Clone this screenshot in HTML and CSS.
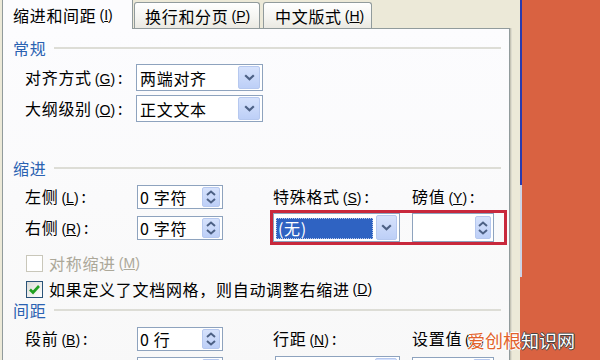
FILE: index.html
```html
<!DOCTYPE html>
<html lang="zh-CN">
<head>
<meta charset="utf-8">
<title>段落</title>
<link rel="stylesheet" href="styles.css">
</head>
<body>
<div class="screen">
  <div class="dialog">
    <div class="tabs">
      <div class="tab active">缩进和间距<span class="k">(<u>I</u>)</span></div>
      <div class="tab t2">换行和分页<span class="k">(<u>P</u>)</span></div>
      <div class="tab t3">中文版式<span class="k">(<u>H</u>)</span></div>
    </div>
    <div class="panel">
      <div class="group g1"><span class="gt">常规</span><span class="gl"></span></div>
      <div class="row r1">
        <div class="lbl">对齐方式<span class="k">(<u>G</u>)</span><span class="c">:</span></div>
        <div class="combo"><span class="val">两端对齐</span><span class="dd"><svg width="11" height="7" viewBox="0 0 11 7"><polyline points="1.2,1.2 5.5,5.3 9.8,1.2" fill="none" stroke="#4D6185" stroke-width="2.2"/></svg></span></div>
      </div>
      <div class="row r2">
        <div class="lbl">大纲级别<span class="k">(<u>O</u>)</span><span class="c">:</span></div>
        <div class="combo"><span class="val">正文文本</span><span class="dd"><svg width="11" height="7" viewBox="0 0 11 7"><polyline points="1.2,1.2 5.5,5.3 9.8,1.2" fill="none" stroke="#4D6185" stroke-width="2.2"/></svg></span></div>
      </div>

      <div class="group g2"><span class="gt">缩进</span><span class="gl"></span></div>
      <div class="grid indent">
        <div class="lbl">左侧<span class="k">(<u>L</u>)</span><span class="c">:</span></div>
        <div class="spin"><span class="val">0 字符</span><span class="sb"><svg width="12" height="16" viewBox="0 0 12 16"><polyline points="2,6 6,2.5 10,6" fill="none" stroke="#4D6185" stroke-width="2"/><polyline points="2,10 6,13.5 10,10" fill="none" stroke="#4D6185" stroke-width="2"/></svg></span></div>
        <div class="lbl">特殊格式<span class="k">(<u>S</u>)</span><span class="c">:</span></div>
        <div class="lbl">磅值<span class="k">(<u>Y</u>)</span><span class="c">:</span></div>

        <div class="lbl">右侧<span class="k">(<u>R</u>)</span><span class="c">:</span></div>
        <div class="spin"><span class="val">0 字符</span><span class="sb"><svg width="12" height="16" viewBox="0 0 12 16"><polyline points="2,6 6,2.5 10,6" fill="none" stroke="#4D6185" stroke-width="2"/><polyline points="2,10 6,13.5 10,10" fill="none" stroke="#4D6185" stroke-width="2"/></svg></span></div>
        <div class="mark">
          <div class="combo sel"><span class="val"><span class="hl">(无)</span></span><span class="dd"><svg width="11" height="7" viewBox="0 0 11 7"><polyline points="1.2,1.2 5.5,5.3 9.8,1.2" fill="none" stroke="#4D6185" stroke-width="2.2"/></svg></span></div>
          <div class="spin pt"><span class="val"></span><span class="sb"><svg width="12" height="16" viewBox="0 0 12 16"><polyline points="2,6 6,2.5 10,6" fill="none" stroke="#4D6185" stroke-width="2"/><polyline points="2,10 6,13.5 10,10" fill="none" stroke="#4D6185" stroke-width="2"/></svg></span></div>
        </div>
      </div>

      <div class="check c1 dis"><span class="box"></span>对称缩进<span class="k">(<u>M</u>)</span></div>
      <div class="check c2"><span class="box on"><svg width="15" height="15" viewBox="0 0 15 15"><polyline points="3,7.5 6,10.5 12,4" fill="none" stroke="#21A121" stroke-width="2.6"/></svg></span>如果定义了文档网格，则自动调整右缩进<span class="k">(<u>D</u>)</span></div>

      <div class="group g3"><span class="gt">间距</span><span class="gl"></span></div>
      <div class="grid spacing">
        <div class="lbl">段前<span class="k">(<u>B</u>)</span><span class="c">:</span></div>
        <div class="spin"><span class="val">0 行</span><span class="sb"><svg width="12" height="16" viewBox="0 0 12 16"><polyline points="2,6 6,2.5 10,6" fill="none" stroke="#4D6185" stroke-width="2"/><polyline points="2,10 6,13.5 10,10" fill="none" stroke="#4D6185" stroke-width="2"/></svg></span></div>
        <div class="lbl">行距<span class="k">(<u>N</u>)</span><span class="c">:</span></div>
        <div class="lbl">设置值<span class="k">(<u>A</u>)</span><span class="c">:</span></div>

        <div class="lbl">段后<span class="k">(<u>F</u>)</span><span class="c">:</span></div>
        <div class="spin"><span class="val">0 行</span><span class="sb"></span></div>
        <div class="combo lw"><span class="val">单倍行距</span><span class="dd"></span></div>
        <div class="spin pt2"><span class="val"></span><span class="sb"></span></div>
      </div>
    </div>
  </div>
  <div class="side"><div class="edge"></div></div>
  <div class="wm"><span class="wa">爱创根</span><span class="wb">知识网</span></div>
</div>
</body>
</html>
```

FILE: styles.css
```css
* { box-sizing: border-box; }
html, body { margin: 0; padding: 0; }
body {
  width: 600px;
  height: 360px;
  overflow: hidden;
  font-family: "Noto Sans CJK SC", "Noto Sans", sans-serif;
  font-size: 16px;
  color: #000;
}
.screen {
  position: relative;
  display: flex;
  width: 600px;
  height: 360px;
  overflow: hidden;
  background: #ECE9D8;
}
.dialog {
  width: 520px;
  flex: none;
  padding-left: 2px;
  background: #ECE9D8;
}

/* tabs */
.tabs { display: flex; align-items: flex-end; height: 28px; }
.tab {
  display: flex;
  align-items: center;
  line-height: 20px;
  letter-spacing: 0.7px;
  white-space: nowrap;
}
.tab.active {
  position: relative;
  z-index: 1;
  width: 131px;
  height: 29px;
  margin-bottom: -1px;
  padding-left: 10px;
  background: #FCFCFE;
  border-left: 1px solid #919B9C;
  border-right: 1px solid #919B9C;
}
.t2, .t3 {
  height: 26px;
  border: 1px solid #919B9C;
  border-bottom: none;
  border-radius: 3px 3px 0 0;
  background: linear-gradient(#FFFFFF, #F4F4F0 60%, #EAE9E2);
}
.t2 { margin-left: 1px; width: 126px; padding-left: 10px; }
.t3 { margin-left: 3px; width: 109px; padding-left: 11px; }

.k {
  font-family: "Liberation Sans", Arial, sans-serif;
  font-size: 14px;
  letter-spacing: 0;
  margin-left: 3px;
}
.c { margin-left: 3px; }

/* panel */
.panel {
  width: 508px;
  height: 345px;
  border: 1px solid #919B9C;
  background: linear-gradient(#FCFCFE, #F8F8F8);
  padding: 0 8px 0 10px;
  box-shadow: 1px 0 0 #C5C3B5, 2px 0 0 #DDDBCE;
}
.group {
  display: flex;
  align-items: center;
  height: 20px;
  line-height: 20px;
  color: #2A62B2;
  letter-spacing: 0.7px;
}
.gl { flex: 1; height: 2px; background: #DDDDD6; margin-left: 8px; }
.g1 { margin-top: 9px; }
.g2 { margin-top: 36px; }
.g3 { margin-top: 2px; }

.row { display: flex; align-items: center; height: 27px; padding-left: 12px; }
.r1 { margin-top: 6px; }
.r2 { margin-top: 4px; }
.lbl {
  white-space: nowrap;
  letter-spacing: 0.7px;
  line-height: 20px;
}
.row .lbl { width: 111px; flex: none; }

/* controls */
.combo {
  display: flex;
  align-items: center;
  width: 127px;
  height: 27px;
  border: 1px solid #8EA3BE;
  background: #fff;
  padding: 1px 2px 1px 3px;
}
.val {
  flex: 1;
  min-width: 0;
  white-space: nowrap;
  line-height: 20px;
  letter-spacing: 0.7px;
}
.dd {
  flex: none;
  width: 22px;
  height: 23px;
  border: 1px solid #B6C8EF;
  border-radius: 2px;
  background: linear-gradient(#D6E2FC, #BDCFF7);
  display: flex;
  align-items: center;
  justify-content: center;
}
.spin {
  display: flex;
  align-items: center;
  width: 86px;
  height: 24px;
  margin-left: 1px;
  border: 1px solid #8EA3BE;
  background: #fff;
  padding: 1px 2px 1px 2px;
}
.sb {
  flex: none;
  width: 18px;
  height: 20px;
  border: 1px solid #B6C8EF;
  border-radius: 2px;
  background: linear-gradient(#D6E2FC, #BDCFF7);
  display: flex;
  align-items: center;
  justify-content: center;
}

/* grids */
.grid {
  display: grid;
  grid-template-columns: 111px 137px 139px 1fr;
  align-items: center;
  padding-left: 12px;
}
.indent { margin-top: 6px; grid-template-rows: 26px 35px; }
.spacing { margin-top: 7px; grid-template-rows: 24px 24px; row-gap: 6px; }

.mark {
  grid-column: 3 / 5;
  margin-left: -3px;
  width: 237px;
  height: 35px;
  border: 3px solid #C8283C;
  display: flex;
  align-items: center;
  gap: 12px;
}
.sel { height: 29px; padding-left: 2px; }
.sel .dd { height: 25px; width: 21px; }
.hl {
  display: inline-block;
  width: 97px;
  height: 21px;
  padding-left: 1px;
  line-height: 19px;
  background: #2F63C2;
  color: #fff;
  border: 1px dotted #B9C9EA;
  vertical-align: middle;
}
.pt { width: 82px; height: 29px; margin-left: 0; }
.pt .sb { width: 16px; height: 23px; }
.lw { margin-left: 2px; width: 125px; }
.pt2 { width: 82px; margin-left: 0; }

/* checkboxes */
.check {
  display: flex;
  align-items: center;
  height: 18px;
  padding-left: 13px;
  line-height: 18px;
  letter-spacing: 0.7px;
  white-space: nowrap;
}
.c1 { margin-top: 9px; }
.c2 { margin-top: 8px; }
.box {
  flex: none;
  width: 17px;
  height: 17px;
  margin-right: 6px;
  border: 1px solid #2A5378;
  background: linear-gradient(135deg, #DCDCD7, #FFFFFF);
  display: flex;
  align-items: center;
  justify-content: center;
}
.dis { color: #ACA899; }
.dis .box { border-color: #C9C7BA; background: #FFFFFF; }

/* right side */
.side { flex: 1; display: flex; background: #D96241; }
.edge {
  width: 2px;
  height: 100%;
  background: linear-gradient(#2A3AAE 0, #2A3AAE 185px, #CDD3E6 185px, #CDD3E6 277px, #D96241 277px);
}

/* watermark overlay */
.wm {
  position: absolute;
  left: 467px;
  top: 329px;
  font-size: 18px;
  line-height: 22px;
  white-space: nowrap;
}
.wa {
  color: #E2622B;
  text-shadow: 1px 0 #fff, -1px 0 #fff, 0 1px #fff, 0 -1px #fff;
}
.wb {
  color: #FFFFFF;
  text-shadow: 1px 0 #444, -1px 0 #444, 0 1px #444, 0 -1px #444;
}
```
